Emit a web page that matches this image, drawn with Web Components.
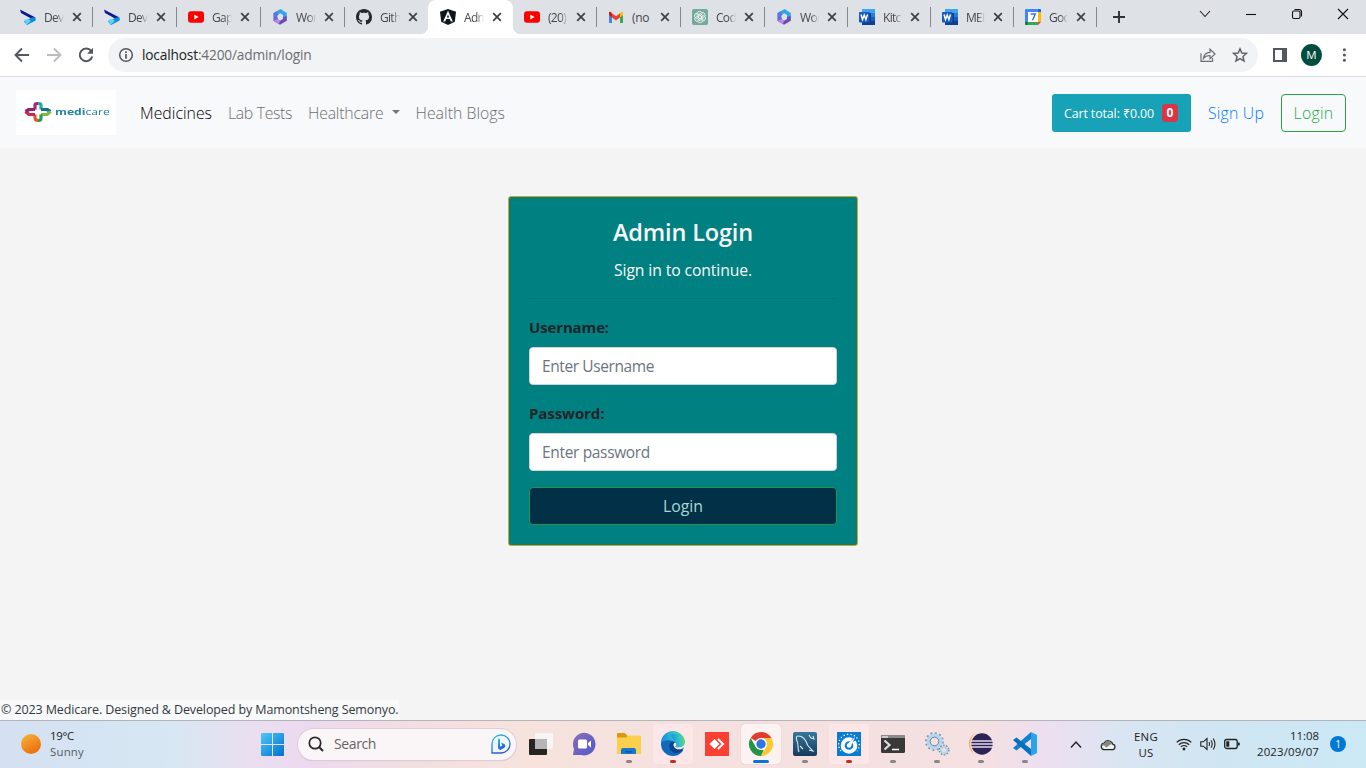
<!DOCTYPE html>
<html lang="en">
<head>
<meta charset="utf-8">
<title>Admin Login</title>
<style>
html,body{margin:0;height:100%;overflow:hidden;background:#f4f4f4}
body{font-family:"Open Sans","Noto Sans",sans-serif}
</style>
</head>
<body>
<desktop-screen></desktop-screen>
<script>
const define = (name, css, html) => customElements.define(name, class extends HTMLElement {
  connectedCallback() {
    if (this.shadowRoot) return;
    this.attachShadow({mode: 'open'}).innerHTML =
      `<style>*{box-sizing:border-box}svg{display:block;overflow:visible}${css}</style>` + (typeof html === 'function' ? html(this) : html);
  }
});

/* Text run whose tracking is adjusted so that it fills the width given in "w". */
customElements.define('fit-text', class extends HTMLElement {
  connectedCallback() {
    if (this.shadowRoot) return;
    this.attachShadow({mode: 'open'}).innerHTML =
      '<style>:host{display:inline-block;white-space:nowrap}span{display:inline-block}</style><span><slot></slot></span>';
    const s = this.shadowRoot.querySelector('span'), w = +this.getAttribute('w');
    const n = this.textContent.length;
    s.style.letterSpacing = ((w - s.getBoundingClientRect().width) / n).toFixed(3) + 'px';
    this.style.width = w + 'px';
  }
});

const icons = {
  dev: [16,'<path d="M0 .5 14.5 8l1 2.500-4.500-1L1 4z" fill="#0b1a8c"/><path d="M15.600 8.500v3L7 16l-3-3.500 8-4z" fill="#0a8be0"/><path d="M4.200 10.800 8.500 10l2.500 2-4.300 3.800z" fill="#5cd5f5"/>'],
  yt: [16,'<rect y="2.300" width="16" height="11.500" rx="3" fill="#f00"/><path d="M6.300 5.500v5l4.300-2.500z" fill="#fff"/>'],
  m365: [16,'<defs><linearGradient id="g" x1="0" y1="1" x2="1" y2="0"><stop stop-color="#7a5fd0"/><stop offset=".5" stop-color="#4f7be3"/><stop offset="1" stop-color="#3fd0f2"/></linearGradient></defs><path d="M7.500.6 1.400 4v7.700l3.400 1.900 1.200-3.500-.8-3L8 3.700l2.500-1.200V.8Q9-.2 7.500.6z" fill="url(#g)"/><path d="M9 .6 14.800 4v5.700l-3.800-1V6L8 4.300 6 5.200V2z" fill="#36a4e8"/><path d="M14.800 7.300v4.400L8 15.800 1.400 11.700l4-1.300L8 11.800l3-1.700V8z" fill="#6d4bb8"/><path d="m1.400 11.700 4.400-1.600L8.300 12l-1.500 3.100z" fill="#bb86e6"/>'],
  github: [16,'<path fill="#24292f" d="M8 0C3.580 0 0 3.580 0 8c0 3.540 2.290 6.530 5.470 7.590.4.070.55-.17.55-.38 0-.19-.01-.82-.01-1.490-2.010.37-2.530-.49-2.690-.94-.09-.23-.48-.94-.82-1.130-.28-.15-.68-.52-.01-.53.63-.01 1.080.58 1.230.82.72 1.210 1.870.87 2.330.66.07-.52.28-.87.51-1.070-1.780-.2-3.640-.89-3.640-3.950 0-.87.31-1.590.82-2.150-.08-.2-.36-1.020.08-2.120 0 0 .67-.21 2.200.82.64-.18 1.320-.27 2-.27s1.360.09 2 .27c1.530-1.040 2.200-.82 2.200-.82.44 1.100.16 1.920.08 2.120.51.56.82 1.270.82 2.150 0 3.070-1.870 3.750-3.650 3.950.29.25.54.73.54 1.480 0 1.070-.01 1.930-.01 2.200 0 .21.15.46.55.38A8.010 8.010 0 0 0 16 8c0-4.420-3.580-8-8-8z"/>'],
  angular: [16,'<path d="M8 0 16 2.700l-1.200 10L8 16l-6.800-3.300L0 2.700z" fill="#10151f"/><path d="M8 1.800 3.200 12.500h2L6.200 10h3.600l1 2.500h2zm0 3.600L9.200 8.400H6.800z" fill="#fff"/>'],
  gmail: [16,'<path d="M1 4v9.500q0 .5.500.500H4V6z" fill="#4285f4"/><path d="M15 4v9.500q0 .5-.5.500H12V6z" fill="#34a853"/><path d="M1 3.500v2.800l3 2.300V4.300C2.500 2.500 1 2.500 1 3.500z" fill="#c5221f"/><path d="M12 4.300v4.300l3-2.300V4c0-2-2-1.500-3 .3z" fill="#fbbc04"/><path d="M4 4.300v4.300l4 3 4-3V4.300l-4 3z" fill="#ea4335"/>'],
  gpt: [16,'<rect width="16" height="16" rx="2" fill="#75a99b"/><g fill="none" stroke="#fff" stroke-width=".8"><g id="p"><path d="M5.200 8.300V4.800a2.500 2.500 0 0 1 4.700-1.200M6.700 7.200l3.500-2"/></g><use href="#p" transform="rotate(60 8 8)"/><use href="#p" transform="rotate(120 8 8)"/><use href="#p" transform="rotate(180 8 8)"/><use href="#p" transform="rotate(240 8 8)"/><use href="#p" transform="rotate(300 8 8)"/></g>'],
  word: [16,'<rect x="3" width="13" height="4.500" fill="#41a5ee"/><rect x="3" y="4" width="13" height="4" fill="#2b7cd3"/><rect x="3" y="8" width="13" height="4" fill="#185abd"/><rect x="3" y="12" width="13" height="4" fill="#103f91"/><rect x="3" y="4" width="9" height="10" fill="#0d3d91"/><rect y="3" width="10.500" height="10.500" rx=".7" fill="#185abd"/><path d="m2 5.500 1.500 5 1.700-4.500 1.700 4.500 1.600-5" fill="none" stroke="#fff" stroke-width="1.500"/>'],
  cal: [16,'<path d="M0 1q0-1 1-1h12v3H3v10H0z" fill="#4285f4"/><path d="M13 0h2q1 0 1 1v2h-3z" fill="#1967d2"/><path d="M13 3h3v10h-3z" fill="#fbbc04"/><path d="M0 13h13v3H1q-1 0-1-1z" fill="#34a853"/><path d="M0 13h3v3H1q-1 0-1-1z" fill="#188038"/><path d="m13 13h3l-3 3z" fill="#ea4335"/><path d="M3 3h10v10H3z" fill="#fff"/><path d="M5.700 5h4.600L7.500 11.200" fill="none" stroke="#2c73e8" stroke-width="1.400"/>'],
  close: [10,'<path d="m1.200 1.200 7.600 7.600m0-7.600L1.200 8.800" stroke="#3c4043" stroke-width="1.700"/>'],
  back: [16,'<path d="M15 8H2M8 1.500 1.500 8 8 14.500" fill="none" stroke="#54575b" stroke-width="1.900"/>'],
  fwd: [16,'<path d="M1 8h13M8 1.500 14.500 8 8 14.500" fill="none" stroke="#babcbe" stroke-width="1.900"/>'],
  reload: [16,'<path d="M13.200 4.200A6.300 6.300 0 1 0 14.200 9.500" fill="none" stroke="#54575b" stroke-width="2"/><path d="M15 .8v6H9z" fill="#54575b"/>'],
  info: [16,'<circle cx="8" cy="8" r="6.300" fill="none" stroke="#54575b" stroke-width="1.500"/><path d="M8 7v4.700M8 4.300v1.600" stroke="#54575b" stroke-width="1.700"/>'],
  share: [16,'<path d="M1 6.200V14.300h11.500V11M3.500 11.500C4 7.500 6.500 5.500 10 5.400V2.200L15 7l-5 4.600V8.500c-3 0-5 1-6.500 3z" fill="none" stroke="#6b6e72" stroke-width="1.200"/>'],
  star: [16,'<path d="m8 1.800 1.850 4.200 4.600.45-3.500 3.050 1.050 4.500L8 11.650 4 14l1.050-4.500-3.500-3.050L6.150 6z" fill="none" stroke="#5f6368" stroke-width="1.500"/>'],
  panel: [14,'<rect x="1" y="1" width="12" height="12" fill="none" stroke="#54575b" stroke-width="2"/><path d="M9 1h4v12H9z" fill="#54575b"/>'],
  dots: [16,'<g fill="#54575b"><circle cx="8.400" cy="2.800" r="1.500"/><circle cx="8.400" cy="8" r="1.500"/><circle cx="8.400" cy="13.200" r="1.500"/></g>'],
  plus: [12,'<path d="M6 0v12M0 6h12" stroke="#303336" stroke-width="1.900"/>'],
  down: [12,'<path d="m1 3 5 5.500L11 3" fill="none" stroke="#222" stroke-width="1.100"/>'],
  min: [10,'<path d="M0 5.500h10" stroke="#111" stroke-width="1.100"/>'],
  restore: [10,'<rect x=".5" y="2" width="7.500" height="7.500" rx="1.500" fill="none" stroke="#111" stroke-width="1.100"/><path d="M2.500.5H7q2.500 0 2.500 2.500v4.500" fill="none" stroke="#111" stroke-width="1.100"/>'],
  x: [10,'<path d="M0 0 10 10M10 0 0 10" stroke="#111" stroke-width="1.100"/>'],
  sun: [20,'<defs><linearGradient id="g" x1=".1" y1="0" x2=".7" y2="1"><stop stop-color="#f3b63a"/><stop offset="1" stop-color="#f0690a"/></linearGradient></defs><circle cx="10" cy="10" r="10" fill="url(#g)"/>'],
  win: [23,'<defs><linearGradient id="g" gradientUnits="userSpaceOnUse" x1="0" y1="0" x2="23" y2="23"><stop stop-color="#4cc9fb"/><stop offset="1" stop-color="#006fce"/></linearGradient></defs><path d="M1 0h10v11H0V1q0-1 1-1zm11 0h10q1 0 1 1v10H12zM0 12h11v11H1q-1 0-1-1zm12 0h11v10q0 1-1 1H12z" fill="url(#g)"/>'],
  search: [16,'<circle cx="7" cy="7" r="5.700" fill="none" stroke="#2a2727" stroke-width="1.700"/><path d="m11 11 4 4" stroke="#2a2727" stroke-width="2"/>'],
  bing: [20,'<defs><linearGradient id="g" x2=".4" y2="1"><stop stop-color="#27c3e9"/><stop offset="1" stop-color="#2a58d5"/></linearGradient></defs><path d="M1 19V10a9 9 0 1 1 9 9z" fill="#eef7fd" stroke="url(#g)" stroke-width="1.300"/><path d="M7 4.500 9 5.300v7.400l2.300-1.300-1.200-2.600 3.400 1.300q1.400 1.600.2 3.400L9.300 16 7 14.400z" fill="url(#g)"/>'],
  tasks: [24,'<rect x="0" y="7" width="18" height="16" rx="1" fill="#262524"/><rect x="6" y="1" width="18" height="16" rx="1" fill="#f6f6f6"/><rect x="6" y="7" width="12" height="10" fill="#b6b5b5"/>'],
  chat: [24,'<defs><linearGradient id="g" x1="0" x2="1" y2="1"><stop stop-color="#8e6bb2"/><stop offset="1" stop-color="#4d5bd2"/></linearGradient></defs><path d="M0 23 1 17A11.300 11.300 0 1 1 8 23z" fill="url(#g)"/><rect x="5" y="7.500" width="9" height="9" rx="1.500" fill="#fff"/><path d="m15 11 3-2.500v7l-3-2.500z" fill="#fff"/>'],
  folder: [24,'<path d="M0 2q0-1 1-1h7l2.500 3H23q1 0 1 1v5H0z" fill="#d99a0b"/><path d="M0 5.500h9l2-2h12q1 0 1 1V22H0z" fill="#fccf4c"/><path d="M4 22v-4q0-2 2-2h11q2 0 2 2v4z" fill="#1579d0"/><path d="M8 19h7v1.500H8z" fill="#0a57a5"/>'],
  edge: [24,'<defs><linearGradient id="g" x1="0" x2="1" y1=".3" y2=".2"><stop stop-color="#1b8fdb"/><stop offset=".55" stop-color="#2fc1d3"/><stop offset="1" stop-color="#65dc5a"/></linearGradient></defs><circle cx="12" cy="12" r="12" fill="#1169bd"/><path d="M0 11A12 12 0 0 1 24 11c0 5-7 6.500-9.700 4 2-2 1-4.500-1.300-5.400C8 7.500 3 8 0 11z" fill="url(#g)"/><path d="M8.300 14c0-4 3.500-5.300 6-3.200-3 1-1.500 5.200 2 6.200 3 .8 5-.5 6-1.300-1 3.500-4 5.300-7 5.300-4 0-7-3-7-7z" fill="#0c438d"/><path d="M14.300 10.500c-3.500 1-1.500 6 2.200 6.700 3 .6 6-.7 7-2.700-.5 2-2 3-2 3l3 1V9l-3 5c-2 2-6 1.500-7.200.8 1.500-1.500 1.300-3 0-4.300z" fill="#fbe7ea"/><path d="M10 3c8-3 13 2 14 7 0 3-2 4.500-5 5l-4.500-.5c1.500-1.500 1-4.500-1.500-5.200z" fill="url(#g)"/>'],
  anydesk: [24,'<path d="M0 0h24v24H0z" fill="#fa4033"/><path d="m9.500 7 5 5-5 5-5-5z" fill="#fff"/><path d="m13 7 5 5-5 5" fill="none" stroke="#fff" stroke-width="2"/>'],
  chrome: [24,'<path d="M12 12 1.600 6A12 12 0 0 1 22.400 6z" fill="#e33b2e"/><path d="M12 6h10.400A12 12 0 0 1 12 24l5.200-9z" fill="#fcc934"/><path d="M1.600 6 6.800 15l5.200 3 2.700 0L12 24A12 12 0 0 1 1.600 6z" fill="#269447"/><circle cx="12" cy="12" r="6" fill="#fff"/><circle cx="12" cy="12" r="4.700" fill="#3175e0"/>'],
  mysql: [24,'<defs><linearGradient id="g" x2="0" y2="1"><stop stop-color="#37779c"/><stop offset="1" stop-color="#173b5e"/></linearGradient></defs><rect width="24" height="24" rx="2" fill="url(#g)"/><path d="M6 20C4 16 6 13 4 9 3 6 3 4 5 4c5 0 8 4 9.500 9 1 2 3 3 5.500 6l-4-1M7 14l3 3M16 3l2 3 3 1-1-3" fill="none" stroke="#dbe8ee" stroke-width="1.100"/>'],
  gauge: [24,'<path d="M0 0h24v24H0z" fill="#087bd4"/><path d="M4 19a10.300 10.300 0 1 1 16 0" fill="none" stroke="#fff" stroke-width="1.300" stroke-dasharray="1.300 2.200"/><circle cx="12" cy="13.500" r="6.300" fill="none" stroke="#fff" stroke-width="4"/><path d="m12 12 4.500-7 3 3z" fill="#087bd4"/><path d="m10.500 12 7.500-7-4 9z" fill="#fff"/><circle cx="12" cy="13.500" r="2.200" fill="#fff"/>'],
  terminal: [24,'<rect y="3" width="24" height="18" rx="1.500" fill="#383838"/><path d="M0 6V4.500Q0 3 1.500 3h21Q24 3 24 4.500V6z" fill="#8d8b89"/><path d="M1 4h6v2H1z" fill="#ccc"/><path d="m3.500 8.500 5 4.500-5 4.500" fill="none" stroke="#ddd" stroke-width="2.200"/><path d="M11 17.500h7" stroke="#fff" stroke-width="1.500"/>'],
  gears: [24,'<g fill="none"><circle cx="9.500" cy="9.500" r="8.300" stroke="#7f9cb4" stroke-width="2.300" stroke-dasharray="2 2.350"/><circle cx="9.500" cy="9.500" r="6.200" stroke="#b4d6ee" stroke-width="3.500"/><circle cx="9.500" cy="9.500" r="4.300" stroke="#56799a" stroke-width=".9"/><circle cx="19" cy="18" r="4.500" stroke="#76899a" stroke-width="2" stroke-dasharray="1.500 1.330"/><circle cx="19" cy="18" r="3" stroke="#b4d6ee" stroke-width="2.300"/></g>'],
  eclipse: [24,'<ellipse cx="10" cy="12" rx="10" ry="11" fill="#f6a133"/><ellipse cx="11" cy="12" rx="10" ry="11.500" fill="#f5e1e2"/><circle cx="13" cy="12" r="10.700" fill="#2c2255"/><path d="M2 9h22M2 12h22M2 15h22" stroke="#dedce9" stroke-width="1.500"/>'],
  vscode: [24,'<path d="m18 0 6 3v18l-6 3z" fill="#2aa4ec"/><path d="M18 0v7L3.500 18.500 0 16z" fill="#1380cb"/><path d="M18 24v-7L3.500 5.500 0 8z" fill="#0671bd"/>'],
  up: [12,'<path d="m1 8.500 5-5.500L11 8.500" fill="none" stroke="#222" stroke-width="1.400"/>'],
  cloud: [16,'<path d="M4 12.700a3.300 3.300 0 0 1 0-6.500 4.700 4.700 0 0 1 8.700 1 2.800 2.800 0 0 1 0 5.500z" fill="#eee" stroke="#222" stroke-width="1.200"/><path d="M1.500 8.800C1.500 6.500 3.800 6.200 4.300 6.500c1-3 6-4.500 8 .7l-2 .3-4 3-2-2z" fill="#858585"/>'],
  wifi: [16,'<g fill="none" stroke="#222" stroke-width="1.200"><path d="M.7 6.400a10.400 10.400 0 0 1 14.600 0M2.800 8.700a7.400 7.400 0 0 1 10.400 0M4.900 10.900a4.400 4.400 0 0 1 6.200 0"/></g><circle cx="8" cy="13" r="1.400" fill="#222"/>'],
  volume: [16,'<g fill="none" stroke="#222" stroke-width="1.100"><path d="M.8 5.800h2.500L7 2.500v11L3.300 10.200H.8zM9 6q1.200 2 0 4M11 4.200q2.400 3.800 0 7.600M13.200 2.500q3.600 5.500 0 11"/></g>'],
  battery: [16,'<rect x=".7" y="3.500" width="12.500" height="9" rx="2" fill="none" stroke="#222" stroke-width="1.300"/><path d="M2.300 5.200h3v5.600h-3zM14 6.500h1.700v3H14z" fill="#222"/>']
};
define('ui-icon', ':host{display:block;flex:none}', e => {
  const [v, body] = icons[e.getAttribute('name')];
  return `<svg width="${v}" height="${v}" viewBox="0 0 ${v} ${v}">${body}</svg>`;
});

define('browser-tab', `
:host{display:flex;flex:none;align-items:center;height:34px;width:84px;padding:0 0 0 12px;position:relative;color:#45484c;font-size:12px}
:host([narrow]){width:83px}
:host::after{content:"";position:absolute;right:-1px;top:7px;height:20px;width:1px;background:#85888c}
:host([last])::after,:host([active])::after{display:none}
:host([active]){background:#fff;border-radius:8px 8px 0 0;width:85px;margin-right:-1px;z-index:1}
:host([active])::before{content:"";position:absolute;left:-8px;right:-8px;bottom:0;height:8px;background:radial-gradient(circle at 0 0,transparent 8px,#fff 8.500px) left/8px 8px no-repeat,radial-gradient(circle at 100% 0,transparent 8px,#fff 8.500px) right/8px 8px no-repeat}
.t{width:20px;margin:0 8px 0 8px;overflow:hidden;white-space:nowrap;letter-spacing:-.7px;-webkit-mask:linear-gradient(90deg,#000 60%,transparent);mask:linear-gradient(90deg,#000 60%,transparent)}
:host([narrow]) .t{width:19px}
:host([nofade]) .t{mask:none;-webkit-mask:none;letter-spacing:-.3px}`,
e => `<ui-icon name="${e.getAttribute('icon')}"></ui-icon><div class="t"><slot></slot></div><ui-icon name="close"></ui-icon>`);

define('tab-strip', `
:host{display:flex;height:34px;background:#dee1e6;padding-left:8px}
.new{width:46px;display:flex;align-items:center;justify-content:center}
.win{margin-left:auto;display:flex;height:28px;width:184px}
.win>*{width:46px;display:flex;align-items:center;justify-content:center}`, `
<browser-tab icon="dev">Dev</browser-tab><browser-tab icon="dev">Dev</browser-tab><browser-tab icon="yt">Gap</browser-tab><browser-tab icon="m365">Wor</browser-tab><browser-tab icon="github" last>Gith</browser-tab><browser-tab icon="angular" active>Adm</browser-tab><browser-tab icon="yt">(20)</browser-tab><browser-tab icon="gmail" nofade>(no</browser-tab><browser-tab icon="gpt">Cod</browser-tab><browser-tab icon="m365" narrow>Wor</browser-tab><browser-tab icon="word" narrow>Kitc</browser-tab><browser-tab icon="word" narrow>MED</browser-tab><browser-tab icon="cal" narrow>Goo</browser-tab>
<div class="new"><ui-icon name="plus"></ui-icon></div>
<div class="win"><div><ui-icon name="down"></ui-icon></div><div><ui-icon name="min"></ui-icon></div><div><ui-icon name="restore"></ui-icon></div><div><ui-icon name="x"></ui-icon></div></div>`);

define('address-bar', `
:host{display:flex;align-items:center;height:43px;background:#fff;border-bottom:1px solid #dadce0;padding:0 14px;gap:16px}
.box{flex:none;width:1150px;height:34px;border-radius:17px;background:#f1f3f4;display:flex;align-items:center;padding:0 10px;margin-left:-2px}
.url{margin-left:8px;font-size:13.700px;line-height:20px;color:#6a6d71;margin-right:auto;white-space:nowrap}
b{font-weight:400;color:#202124}
.acts{display:flex;gap:16px}
.av{width:22px;height:22px;border-radius:50%;background:#004d40;color:#fff;font-size:11.500px;line-height:22px;text-align:center;margin-left:-2px;margin-right:-2px;font-weight:500}
.pn{margin-left:-1px}`, `
<ui-icon name="back"></ui-icon><ui-icon name="fwd"></ui-icon><ui-icon name="reload"></ui-icon>
<div class="box"><ui-icon name="info"></ui-icon><div class="url"><fit-text w="169.500"><b>localhost</b>:4200/admin/login</fit-text></div><div class="acts"><ui-icon name="share"></ui-icon><ui-icon name="star"></ui-icon></div></div>
<ui-icon class="pn" name="panel"></ui-icon><div class="av">M</div><ui-icon name="dots"></ui-icon>`);

/* The wordmark is a wide face: the letters are stretched horizontally from the left edge. */
define('medicare-logo', `
:host{display:flex;width:100px;height:45px;background:#fff;align-items:center;padding-left:8px;gap:3px;font-size:9.500px;line-height:14px;color:#2383a3}
.word{width:53px;margin-top:-1px;white-space:nowrap}
.word span{display:inline-block;transform:scaleX(1.280);transform-origin:0 50%}
b{font-weight:700}`, `
<svg width="28" height="20" viewBox="0 0 28 20"><g fill="none" stroke-width="3.200" stroke-linejoin="round"><path d="M11 7.500V3q0-1.500 2-1.500h1" stroke="#a32a78"/><path d="M14 1.500h1q2 0 2 1.500v4.500" stroke="#28a6ad"/><path d="M17 7.500h6l3.500 2" stroke="#176f8f"/><path d="M26.500 9.500 23 12.500h-6" stroke="#84b83a"/><path d="M17 12.500v3q0 3-2 3h-1" stroke="#2d9a62"/><path d="M14 18.500q-3 0-3-3v-3" stroke="#e4572e"/><path d="M11 12.500H5L1.500 9.500" stroke="#c9294f"/><path d="M1.500 9.500 5 7.500h6" stroke="#9b1e68"/></g></svg>
<div class="word"><span><b>medi</b>care</span></div>`);

define('nav-bar', `
:host{display:flex;align-items:center;height:71px;background:#f8f9fb;padding:0 20px 0 16px;font-size:15.800px;font-weight:330;line-height:24px;color:#6c6e70}
medicare-logo{margin:-1px 24px 0 0;font-weight:400}
.links{display:flex;gap:16px;align-items:center;margin-top:1px}
.on{color:#000}
.dd{display:flex;align-items:center;gap:8px}
.dd::after{content:"";border:4px solid transparent;border-top-color:#737577;border-bottom:0;margin-top:-2px}
.right{margin-left:auto;display:flex;align-items:center}
.cart{width:139px;height:38px;border-radius:3px;background:#17a2b8;color:#fff;font-size:12.400px;font-weight:400;display:flex;align-items:center;padding-left:12px;gap:8px}
.cart fit-text{margin-top:3px}
.n{width:16px;height:18px;background:#dc3545;border-radius:4px;font-weight:700;font-size:12px;line-height:18px;text-align:center;margin-top:1px}
.up{color:#007bff;margin:1px 17px 0}
.in{width:65px;height:38px;border:1px solid #28a745;border-radius:4px;color:#28a745;display:flex;align-items:center;justify-content:center;padding-top:1px}`, `
<medicare-logo></medicare-logo>
<div class="links"><fit-text class="on" w="72">Medicines</fit-text><fit-text w="64">Lab Tests</fit-text><div class="dd"><fit-text w="75.500">Healthcare</fit-text></div><fit-text w="89.500">Health Blogs</fit-text></div>
<div class="right"><div class="cart"><fit-text w="90">Cart total: ₹0.00</fit-text><div class="n">0</div></div><fit-text class="up" w="56">Sign Up</fit-text><div class="in"><fit-text w="40">Login</fit-text></div></div>`);

define('form-field', `
:host{display:block;height:86px;font-size:15.500px}
label{display:block;font-weight:700;color:#212529;height:24px;line-height:24px;margin-bottom:8px;font-size:15px}
.input{height:38px;background:#fff;border:1px solid #ced4da;border-radius:4px;color:#6c757d;padding:0 12px;line-height:37px}`,
e => `<label><fit-text w="${e.getAttribute('lw')}">${e.getAttribute('label')}</fit-text></label><div class="input"><fit-text w="${e.getAttribute('pw')}">${e.getAttribute('hint')}</fit-text></div>`);

define('login-card', `
:host{display:block;box-sizing:border-box;width:350px;height:350px;margin:48px auto 0;background:teal;border:1px solid #d5a513;border-radius:3px;padding:20px;color:#f8f9fa;text-align:center}
h1{font-size:23.500px;font-weight:600;height:29px;line-height:29px;margin:1px 0 11px}
p{font-size:15.700px;height:24px;line-height:24px;margin:0 0 16px}
hr{border:0;border-top:1px solid rgba(0,0,0,.1);margin:0 0 16px}
form-field{text-align:left}
.btn{height:38px;background:#023047;border:1px solid #239150;border-radius:4px;color:#a9d6d5;font-size:15.800px;line-height:36px}`, `
<h1><fit-text w="140">Admin Login</fit-text></h1><p><fit-text w="138">Sign in to continue.</fit-text></p><hr>
<form-field label="Username:" lw="80" hint="Enter Username" pw="112"></form-field>
<form-field label="Password:" lw="75.500" hint="Enter password" pw="108"></form-field>
<div class="btn"><fit-text w="40">Login</fit-text></div>`);

define('task-app', `
:host{display:flex;flex:none;width:44px;height:47px;flex-direction:column;align-items:center;padding-top:3px}
.b{width:40px;height:40px;display:flex;flex:none;align-items:center;justify-content:center;border-radius:4px}
:host([alert]) .b{background:#fde6e8}
:host([active]) .b{background:#fbf2f1;box-shadow:0 0 1px #b9a9aa}
.d{width:6px;height:3px;border-radius:1.500px;background:#8b8585;margin-top:-4px;display:none;z-index:1}
:host([open]) .d{display:block}
:host([alert]) .d{background:#c42b1c}
:host([active]) .d{background:#0c75d2;width:16px}`,
e => `<div class="b"><ui-icon name="${e.getAttribute('icon')}"></ui-icon></div><div class="d"></div>`);

define('task-bar', `
:host{display:flex;box-sizing:border-box;height:48px;border-top:1px solid #b5b4ba;align-items:center;background:linear-gradient(90deg,#d4e0f1 0,#d6e7f3 165px,#e9dff0 250px,#edd9ef 310px,#f1dee3 390px,#f7e3dc 530px,#f5e1de 620px,#f5e0e2 980px,#ecdff0 1050px,#dae5f2 1120px,#d0e5f2 1220px,#cbe9f5 1366px);font-size:11.400px;line-height:16px;color:#1c1c1c}
.wx{display:flex;align-items:center;width:260px;padding-left:21px;gap:9px;margin-top:-1px}
.sub{color:#555c66}
.wx div,.lang,.clock{display:flex;flex-direction:column}
.start{width:38px;flex:none;padding-left:1px}
.search{flex:none;width:218px;height:31px;border-radius:16px;background:#faf5f7;box-shadow:0 0 0 1px #ddcdd6,0 1px 1px #bfb2b5;display:flex;align-items:center;padding:0 5px 0 10px;font-size:14px;color:#686366;gap:10px;margin-top:-1px}
.search :last-child{margin-left:auto}
.apps{display:flex;margin-left:3px}
.tray{display:flex;align-items:center;flex:1;padding-left:23px}
.cloud{margin-left:18px}
.lang{align-items:center;width:32px;margin-left:14px}
.net{display:flex;gap:8px;margin-left:14px;margin-top:-1px}
.clock{align-items:flex-end;width:63px;margin-left:16px;margin-top:-1px}
.n{width:16px;height:16px;border-radius:50%;background:#0078d4;color:#fff;font-size:10px;text-align:center;margin:-1px 0 0 11px}`, `
<div class="wx"><ui-icon name="sun"></ui-icon><div><fit-text w="24">19°C</fit-text><fit-text class="sub" w="34">Sunny</fit-text></div></div>
<div class="start"><ui-icon name="win"></ui-icon></div>
<div class="search"><ui-icon name="search"></ui-icon><fit-text w="42">Search</fit-text><ui-icon name="bing"></ui-icon></div>
<div class="apps"><task-app icon="tasks"></task-app><task-app icon="chat"></task-app><task-app icon="folder" open></task-app><task-app icon="edge" open alert></task-app><task-app icon="anydesk"></task-app><task-app icon="chrome" open active></task-app><task-app icon="mysql" open></task-app><task-app icon="gauge" open alert></task-app><task-app icon="terminal" open></task-app><task-app icon="gears" open></task-app><task-app icon="eclipse" open></task-app><task-app icon="vscode" open></task-app></div>
<div class="tray"><ui-icon name="up"></ui-icon><ui-icon class="cloud" name="cloud"></ui-icon><div class="lang"><fit-text w="24">ENG</fit-text><fit-text w="15">US</fit-text></div><div class="net"><ui-icon name="wifi"></ui-icon><ui-icon name="volume"></ui-icon><ui-icon name="battery"></ui-icon></div><div class="clock"><fit-text w="29">11:08</fit-text><fit-text w="62">2023/09/07</fit-text></div><div class="n">1</div></div>`);

define('page-footer', `
:host{display:block;box-sizing:border-box;width:399px;height:20px;background:#f8f9fa;color:#34383c;font-size:12.500px;line-height:19px;padding-left:1px}`,
`<fit-text w="397.500">© 2023 Medicare. Designed &amp; Developed by Mamontsheng Semonyo.</fit-text>`);

define('desktop-screen', `
:host{display:flex;flex-direction:column;width:1366px;height:768px;background:#f4f4f4;overflow:hidden}
main{flex:1}`, `
<tab-strip></tab-strip><address-bar></address-bar><nav-bar></nav-bar><main><login-card></login-card></main><page-footer></page-footer><task-bar></task-bar>`);
</script>
</body>
</html>
